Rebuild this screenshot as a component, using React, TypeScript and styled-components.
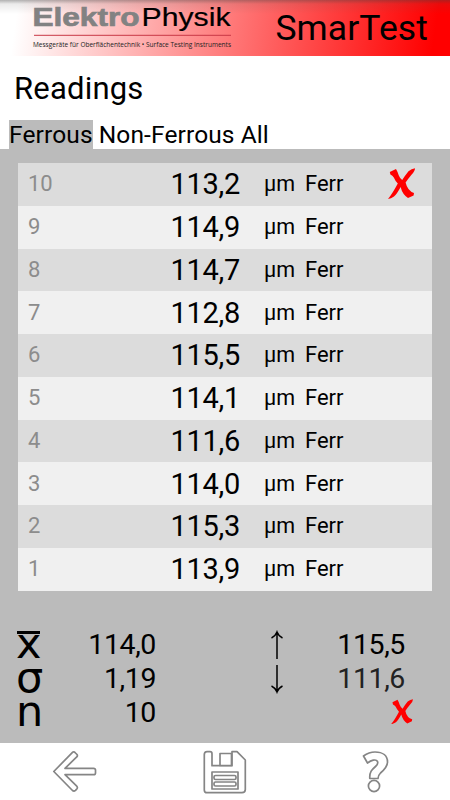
import React from 'react';
import styled, { createGlobalStyle } from 'styled-components';

const GlobalStyle = createGlobalStyle`
  * { box-sizing: border-box; }
  body { margin: 0; background: #fff; font-family: Roboto, sans-serif; color: #000; }
`;

const Screen = styled.main`
  width: 450px;
  height: 800px;
  display: flex;
  flex-direction: column;
  overflow: hidden;
  background: #fff;
`;

const Header = styled.header`
  height: 56px;
  flex: none;
  display: flex;
  justify-content: space-between;
  padding-right: 22px;
  background:
    linear-gradient(to bottom, rgba(70, 70, 70, 0.42) 0, rgba(90, 90, 90, 0.12) 4px, rgba(90, 90, 90, 0) 14px),
    linear-gradient(98deg, #fff 4%, #ff7474 53%, #ff0000 96%);
`;

const Logo = styled.svg`
  width: 240px;
  height: 56px;
  display: block;
`;

const AppName = styled.div`
  font-size: 35.5px;
  line-height: 56px;
  letter-spacing: 0.1px;
`;

const Title = styled.h1`
  height: 64px;
  flex: none;
  margin: 0;
  padding-left: 14px;
  font-size: 31px;
  font-weight: 400;
  line-height: 66px;
  letter-spacing: 0.2px;
`;

const Tabs = styled.nav`
  height: 29px;
  flex: none;
  display: flex;
  margin-left: 9px;
  gap: 6px;
`;

const Tab = styled.div<{ $active?: boolean }>`
  height: 29px;
  font-size: 24.5px;
  line-height: 30px;
  letter-spacing: 0.13px;
  white-space: nowrap;
  background: ${(p) => (p.$active ? '#bbb' : 'transparent')};
`;

const Panel = styled.section`
  height: 594px;
  flex: none;
  padding: 14px 18px 0;
  background: #bbb;
`;

const Table = styled.div`
  height: 427.5px;
  display: grid;
  grid-template-rows: repeat(10, 1fr);
`;

const Row = styled.div`
  display: grid;
  grid-template-columns: 60px 162px 65px 83px 44px;
  align-items: center;
  background: #dcdcdc;
  &:nth-child(even) { background: #f0f0f0; }
`;

const Index = styled.span`
  padding-left: 10px;
  font-size: 22px;
  line-height: 26px;
  letter-spacing: -0.2px;
  color: #8c8c8c;
`;

const Value = styled.span`
  font-size: 29px;
  line-height: 34px;
  letter-spacing: -0.3px;
  text-align: right;
`;

const Unit = styled.span`
  padding-left: 24px;
  font-size: 21.5px;
  line-height: 26px;
`;

const Kind = styled.span`
  font-size: 22px;
  line-height: 26px;
`;

const Stats = styled.div`
  margin-top: 37.5px;
  display: grid;
  grid-template-columns: 40px 98px 130px 119px;
  grid-template-rows: 34px 34px 34px;
  align-items: center;
`;

const Symbol = styled.span<{ $bar?: boolean }>`
  justify-self: start;
  position: relative;
  margin: -5px 0 0 -2px;
  font-family: 'DejaVu Sans', sans-serif;
  font-size: 43px;
  line-height: 34px;
  height: 34px;
  &::before {
    content: '';
    display: ${(p) => (p.$bar ? 'block' : 'none')};
    position: absolute;
    top: 5.5px;
    left: 1px;
    width: 23px;
    height: 2.5px;
    background: #000;
  }
`;

const StatValue = styled.span<{ $soft?: boolean }>`
  font-size: 28.5px;
  line-height: 34px;
  letter-spacing: -0.4px;
  text-align: right;
  color: ${(p) => (p.$soft ? '#222' : '#000')};
`;

const Arrow = styled.svg`
  width: 14px;
  height: 30px;
  justify-self: end;
  margin-right: 2px;
`;

const StatAction = styled.span`
  grid-column: 4;
  display: flex;
  justify-content: flex-end;
  margin: -2px -8px 0 0;
`;

const Cross = styled.svg<{ $size: number }>`
  width: ${(p) => p.$size}px;
  height: ${(p) => (p.$size * 31) / 27}px;
  margin-top: -1px;
  fill: #f00;
`;

const Footer = styled.footer`
  flex: 1;
  display: grid;
  grid-template-columns: repeat(3, 1fr);
  align-items: center;
  justify-items: center;
`;

const Icon = styled.svg`
  width: 46px;
  height: 46px;
  margin-top: -2px;
  fill: #fff;
  stroke: #858585;
  stroke-width: 1.7;
  stroke-linejoin: round;
`;

const DeleteMark = ({ size }: { size: number }) => (
  <Cross $size={size} viewBox="0 0 27 31">
    <path d="M1.8 4 L8 1 Q9.8 4 10.8 7.5 Q12 10.5 14.2 12 Q17 7.5 20.5 3.2 Q23.5 0.6 27 0.2 Q27 3 23.5 6.8 Q20 11 17.6 14.6 Q19.5 23 26 25 L25.6 27.4 L20 30 Q14.5 26.5 12.6 19 Q9 26 6 28.5 Q3 30.5 0 31 Q4.5 25.5 9.8 15.5 Q7 12.5 5.8 9.5 Q4.6 7.4 2.4 6.6Z" />
  </Cross>
);

const readings = ['113,2', '114,9', '114,7', '112,8', '115,5', '114,1', '111,6', '114,0', '115,3', '113,9'];

export default function App() {
  return (
    <Screen>
      <GlobalStyle />
      <Header>
        <Logo viewBox="0 0 240 56">
          <g fontFamily="'Liberation Sans', sans-serif" fontSize="26">
            <text x="32.5" y="25.5" textLength="107" lengthAdjust="spacingAndGlyphs" fontWeight="700" fill="#828282" stroke="#828282" strokeWidth="0.7">Elektro</text>
            <text x="141.5" y="25.5" textLength="89" lengthAdjust="spacingAndGlyphs" stroke="#000" strokeWidth="0.2">Physik</text>
          </g>
          <path d="M34 35.3H231" stroke="#c93845" strokeWidth="1" />
          <text x="33" y="46.8" textLength="198" lengthAdjust="spacingAndGlyphs" fontFamily="'Open Sans', sans-serif" fontSize="6.8" fill="#222">Messgeräte für Oberflächentechnik • Surface Testing Instruments</text>
        </Logo>
        <AppName>SmarTest</AppName>
      </Header>
      <Title>Readings</Title>
      <Tabs>
        <Tab $active>Ferrous</Tab>
        <Tab>Non-Ferrous</Tab>
        <Tab>All</Tab>
      </Tabs>
      <Panel>
        <Table>
          {readings.map((value, i) => (
            <Row key={i}>
              <Index>{readings.length - i}</Index>
              <Value>{value}</Value>
              <Unit>µm</Unit>
              <Kind>Ferr</Kind>
              {i === 0 && <DeleteMark size={27} />}
            </Row>
          ))}
        </Table>
        <Stats>
          <Symbol $bar>x</Symbol>
          <StatValue>114,0</StatValue>
          <Arrow viewBox="0 0 14 30"><path d="M7 29V2M1.5 8Q5.5 6 7 2Q8.5 6 12.5 8" fill="none" stroke="#000" strokeWidth="1.5" /></Arrow>
          <StatValue>115,5</StatValue>
          <Symbol>σ</Symbol>
          <StatValue>1,19</StatValue>
          <Arrow viewBox="0 0 14 30"><path d="M7 1V28M1.5 22Q5.5 24 7 28Q8.5 24 12.5 22" fill="none" stroke="#000" strokeWidth="1.5" /></Arrow>
          <StatValue $soft>111,6</StatValue>
          <Symbol>n</Symbol>
          <StatValue>10</StatValue>
          <StatAction><DeleteMark size={22} /></StatAction>
        </Stats>
      </Panel>
      <Footer>
        <Icon viewBox="0 0 46 46">
          <path d="M1.8 23.5 L20.5 4.3 Q22 3.3 23.5 5 L25 6.5 Q26 8 24.5 9.2 L13 20.3 H41.5 Q43.5 20.3 43.5 22 V25 Q43.5 26.7 41.5 26.7 H13 L24.5 37.8 Q26 39.2 25 40.7 L23.5 42.4 Q22 43.6 20.5 42.5Z" />
        </Icon>
        <Icon viewBox="0 0 46 46">
          <path d="M5 3.7H8Q10 3.7 10 5.7V17.7H30V3.7H35L43.3 12V41.5Q43.3 44.7 40 44.7H5Q2.3 44.7 2.3 42V6.5Q2.3 3.7 5 3.7Z" />
          <path d="M18 5.5H29.5V17.5H18ZM10 24H36V41H10Z" />
          <rect x="12" y="27.5" width="22" height="4" rx="1.5" />
          <rect x="12" y="34" width="22" height="4" rx="1.5" />
        </Icon>
        <Icon viewBox="0 0 46 46">
          <path d="M11.5 8Q17 4 23 4C31 4 35.5 8 35.5 14C35.5 19 32 22 28.5 25Q26 27.5 26 30.5H17.8C17.3 24 20 21.5 23.5 18.5Q26.5 16 25.5 13.5C24 10.5 19 12.5 15.5 15Z" />
          <circle cx="22" cy="38" r="5.6" />
        </Icon>
      </Footer>
    </Screen>
  );
}
